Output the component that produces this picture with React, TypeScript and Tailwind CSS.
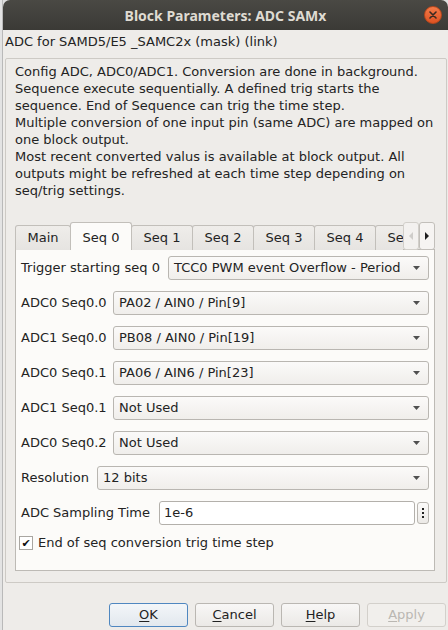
import React from "react";

const tabs = ["Seq 1", "Seq 2", "Seq 3", "Seq 4", "Seq 5"];

function Arrow() {
  return (
    <svg width="7" height="4" viewBox="0 0 7 4">
      <path d="M0 0h7L3.5 4z" fill="#505050" />
    </svg>
  );
}

function Combo({ value }: { value: string }) {
  return (
    <div className="flex h-[24px] flex-1 items-center justify-between rounded-[3px] border border-[#b9b6b1] bg-linear-to-b from-[#fbfaf9] to-[#f0eeeb] pl-[5px] pr-[8px]">
      <span>{value}</span>
      <Arrow />
    </div>
  );
}

function ComboRow({ label, width, value }: { label: string; width: string; value: string }) {
  return (
    <div className="flex h-[24px] items-center">
      <span className={width}>{label}</span>
      <Combo value={value} />
    </div>
  );
}

function Button({ mn, rest, primary, disabled }: { mn: string; rest: string; primary?: boolean; disabled?: boolean }) {
  return (
    <div
      className={
        "flex h-[24px] w-[79px] items-center justify-center rounded-[3px] border " +
        (primary
          ? "border-[#4f87c0] bg-linear-to-b from-[#f3f6f9] to-[#e2e8ee] text-[#222]"
          : disabled
            ? "border-[#d3d0cb] bg-[#f1efec] text-[#bab7b2]"
            : "border-[#bab7b2] bg-linear-to-b from-[#f8f7f6] to-[#ebe9e6] text-[#222]")
      }
    >
      <span>
        <u className="underline-offset-2">{mn}</u>
        {rest}
      </span>
    </div>
  );
}

export default function App() {
  return (
    <div className="flex h-[630px] w-[448px] overflow-hidden bg-[#dedede] font-['DejaVu_Sans',sans-serif] text-[13px] text-[#232323]">
      <div className="w-[3px] border-r border-[#b9b9b9] bg-[#e3e3e3]" />
      <div className="flex flex-1 flex-col overflow-hidden rounded-t-[7px] bg-[#eeece9]">
        {/* title bar */}
        <div className="relative flex h-[30px] items-center justify-center bg-linear-to-b from-[#4a4944] to-[#3b3a36]">
          <span className="font-['Noto_Sans',sans-serif] text-[14px] font-bold text-[#dfdbd2]">
            Block Parameters: ADC SAMx
          </span>
          <div className="absolute right-[6px] top-[6px] flex h-[18px] w-[18px] items-center justify-center rounded-full border border-[#b8471c] bg-linear-to-b from-[#f37a48] to-[#de5221]">
            <svg width="8" height="8" viewBox="0 0 8 8">
              <path d="M1 1L7 7M7 1L1 7" stroke="#3a2a22" strokeWidth="1.6" strokeLinecap="round" />
            </svg>
          </div>
        </div>

        <div className="h-[24px] pl-[2px] leading-[24px]">ADC for SAMD5/E5 _SAMC2x (mask) (link)</div>

        {/* group box */}
        <div className="ml-[2px] mt-[4px] h-[525px] w-[442px] rounded-[2px] border border-[#cdcac5]">
          <div className="px-[9px] pt-[4px] leading-[17px]">
            <p>Config ADC, ADC0/ADC1. Conversion are done in background.</p>
            <p>Sequence execute sequentially. A defined trig starts the</p>
            <p>sequence. End of Sequence can trig the time step.</p>
            <p>Multiple conversion of one input pin (same ADC) are mapped on</p>
            <p>one block output.</p>
            <p>Most recent converted valus is available at block output. All</p>
            <p>outputs might be refreshed at each time step depending on</p>
            <p>seq/trig settings.</p>
          </div>

          {/* tab bar */}
          <div className="relative z-10 mb-[-1px] ml-[9px] mt-[23px] flex h-[28px] w-[420px] items-end">
            <div className="flex h-full w-[388px] items-end overflow-hidden">
              <div className="flex h-[25px] w-[56px] shrink-0 items-center justify-center rounded-t-[3px] border border-b-0 border-[#c2bfba] bg-linear-to-b from-[#efedea] to-[#e6e4e1] pb-[1px]">
                Main
              </div>
              <div className="relative z-10 -ml-px flex h-[28px] w-[62px] shrink-0 items-center justify-center rounded-t-[3px] border border-b-0 border-[#c2bfba] bg-[#fcfbf9] pt-[3px]">
                Seq 0
              </div>
              {tabs.map((t) => (
                <div
                  key={t}
                  className="-ml-px flex h-[25px] w-[62px] shrink-0 items-center justify-center rounded-t-[3px] border border-b-0 border-[#c2bfba] bg-linear-to-b from-[#efedea] to-[#e6e4e1] pb-[1px]"
                >
                  {t}
                </div>
              ))}
            </div>
            <div className="flex h-[28px] w-[16px] items-center justify-center rounded-[3px] border border-[#d2cfca] bg-[#f3f1ef]">
              <svg width="4" height="8" viewBox="0 0 4 8">
                <path d="M4 0v8L0 4z" fill="#cfcdca" />
              </svg>
            </div>
            <div className="flex h-[28px] w-[16px] items-center justify-center rounded-[3px] border border-[#c2bfba] bg-[#f6f4f2]">
              <svg width="4" height="8" viewBox="0 0 4 8">
                <path d="M0 0v8L4 4z" fill="#1e1e1e" />
              </svg>
            </div>
          </div>

          {/* tab panel */}
          <div className="ml-[9px] flex h-[322px] w-[420px] flex-col gap-[11px] border border-[#bdbab5] bg-[#fcfbf9] pl-[5px] pr-[5px] pt-[6px]">
            <ComboRow label="Trigger starting seq 0" width="w-[147px] shrink-0" value="TCC0 PWM event Overflow - Period" />
            <ComboRow label="ADC0 Seq0.0" width="w-[92px] shrink-0" value="PA02 / AIN0 / Pin[9]" />
            <ComboRow label="ADC1 Seq0.0" width="w-[92px] shrink-0" value="PB08 / AIN0 / Pin[19]" />
            <ComboRow label="ADC0 Seq0.1" width="w-[92px] shrink-0" value="PA06 / AIN6 / Pin[23]" />
            <ComboRow label="ADC1 Seq0.1" width="w-[92px] shrink-0" value="Not Used" />
            <ComboRow label="ADC0 Seq0.2" width="w-[92px] shrink-0" value="Not Used" />
            <ComboRow label="Resolution" width="w-[76px] shrink-0" value="12 bits" />
            <div className="flex h-[24px] items-center">
              <span className="w-[138px] shrink-0">ADC Sampling Time</span>
              <div className="flex h-[24px] w-[256px] items-center rounded-[3px] border border-[#b3b0ab] bg-white pl-[4px]">
                1e-6
              </div>
              <div className="ml-[2px] flex h-[22px] w-[12px] flex-col items-center justify-center gap-[2px] rounded-[3px] border border-[#b9b6b1] bg-linear-to-b from-[#fbfaf9] to-[#eceae7]">
                <span className="h-[2px] w-[2px] bg-[#222]" />
                <span className="h-[2px] w-[2px] bg-[#222]" />
                <span className="h-[2px] w-[2px] bg-[#222]" />
              </div>
            </div>
            <div className="-mt-[1px] flex h-[16px] items-center">
              <div className="-ml-[2px] flex h-[14px] w-[14px] items-center justify-center border border-[#a9a6a1] bg-white text-[11px] leading-none text-[#111]">
                ✔
              </div>
              <span className="ml-[5px]">End of seq conversion trig time step</span>
            </div>
          </div>
        </div>

        {/* buttons */}
        <div className="mt-[20px] flex justify-end gap-[7px] pr-[2px]">
          <Button mn="O" rest="K" primary />
          <Button mn="C" rest="ancel" />
          <Button mn="H" rest="elp" />
          <Button mn="A" rest="pply" disabled />
        </div>
      </div>
    </div>
  );
}
